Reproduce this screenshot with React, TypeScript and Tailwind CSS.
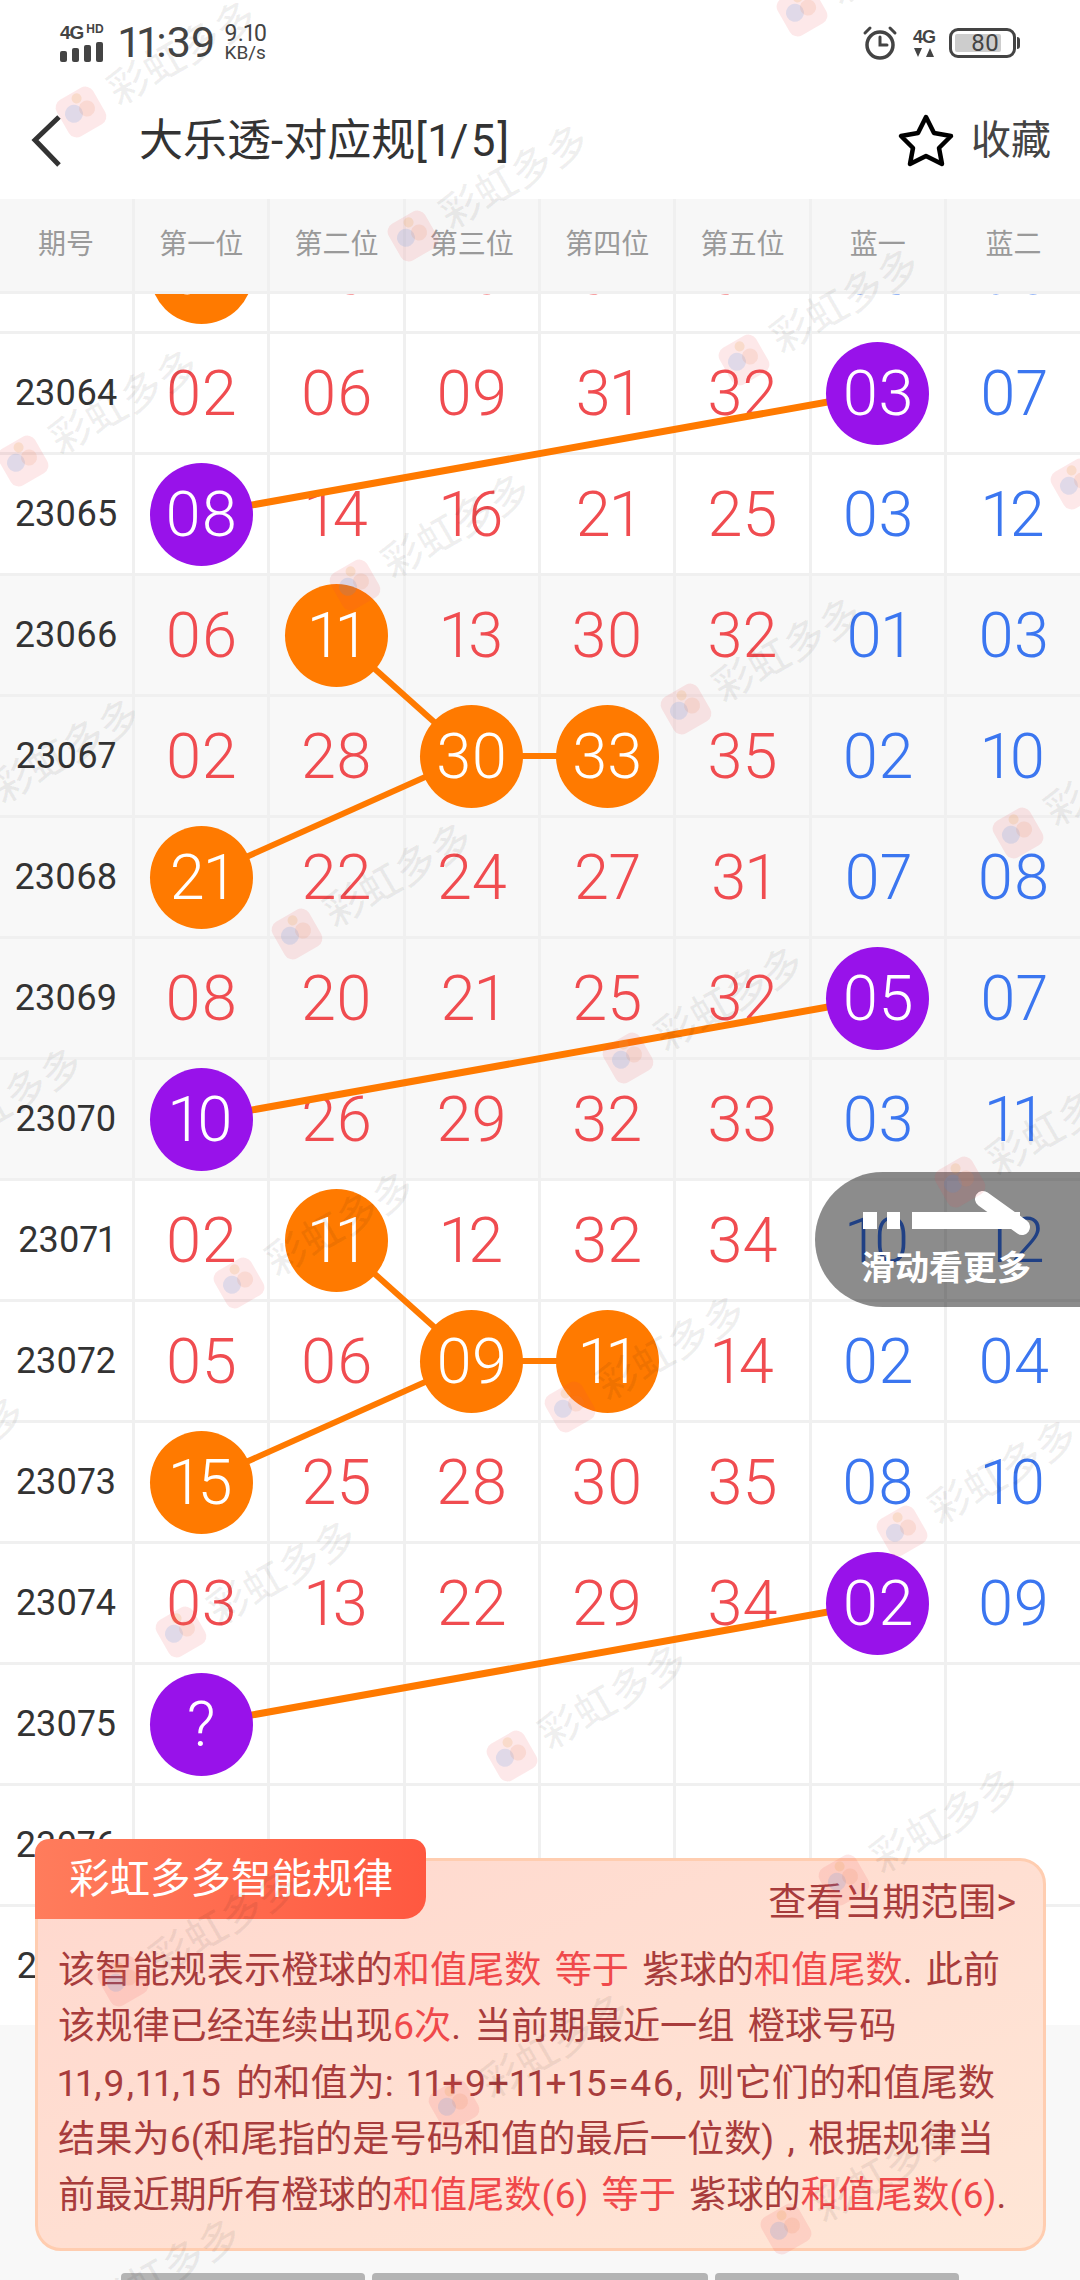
import React from "react";

type Ball = "o" | "p";
type Row = { id: string; nums: string[]; balls?: Record<number, Ball> };

const rows: Row[] = [
  { id: "23063", nums: ["01", "13", "16", "31", "34", "03", "05"], balls: { 0: "o" } },
  { id: "23064", nums: ["02", "06", "09", "31", "32", "03", "07"], balls: { 5: "p" } },
  { id: "23065", nums: ["08", "14", "16", "21", "25", "03", "12"], balls: { 0: "p" } },
  { id: "23066", nums: ["06", "11", "13", "30", "32", "01", "03"], balls: { 1: "o" } },
  { id: "23067", nums: ["02", "28", "30", "33", "35", "02", "10"], balls: { 2: "o", 3: "o" } },
  { id: "23068", nums: ["21", "22", "24", "27", "31", "07", "08"], balls: { 0: "o" } },
  { id: "23069", nums: ["08", "20", "21", "25", "32", "05", "07"], balls: { 5: "p" } },
  { id: "23070", nums: ["10", "26", "29", "32", "33", "03", "11"], balls: { 0: "p" } },
  { id: "23071", nums: ["02", "11", "12", "32", "34", "10", "12"], balls: { 1: "o" } },
  { id: "23072", nums: ["05", "06", "09", "11", "14", "02", "04"], balls: { 2: "o", 3: "o" } },
  { id: "23073", nums: ["15", "25", "28", "30", "35", "08", "10"], balls: { 0: "o" } },
  { id: "23074", nums: ["03", "13", "22", "29", "34", "02", "09"], balls: { 5: "p" } },
  { id: "23075", nums: ["?", "", "", "", "", "", ""], balls: { 0: "p" } },
  { id: "23076", nums: ["", "", "", "", "", "", ""] },
  { id: "23077", nums: ["", "", "", "", "", "", ""] },
];

const cx = (c: number) => 201.5 + 135.33 * c;
const cy = (r: number) => 59 + 121 * r;
const segs: [number, number, number, number, number][] = [
  [1, 5, 2, 0, 7],
  [3, 1, 4, 2, 6],
  [4, 2, 4, 3, 6],
  [4, 2, 5, 0, 6],
  [6, 5, 7, 0, 7],
  [8, 1, 9, 2, 6],
  [9, 2, 9, 3, 6],
  [9, 2, 10, 0, 6],
  [11, 5, 12, 0, 7],
];

const heads = ["期号", "第一位", "第二位", "第三位", "第四位", "第五位", "蓝一", "蓝二"];

const marks: { x: number; y: number }[] = [];
for (let i = -3; i < 5; i++) {
  for (let j = -1; j < 8; j++) {
    const x = 81 + 331.5 * i - 58 * j;
    const y = 112 + 124 * i + 349 * j;
    if (x > -220 && x < 1100 && y > -30 && y < 2400) marks.push({ x, y });
  }
}

function Watermark({ x, y }: { x: number; y: number }) {
  return (
    <div className="absolute w-0 h-0" style={{ left: x, top: y }}>
      <div className="absolute -left-[24px] -top-[30px] h-[60px] flex items-center gap-[11px] origin-[24px_30px] -rotate-[30deg] whitespace-nowrap">
        <svg width="48" height="48" viewBox="0 0 48 48" className="shrink-0">
          <rect x="3" y="3" width="42" height="42" rx="9" fill="#f0404a" opacity="0.12" />
          <circle cx="17" cy="22" r="9" fill="#4a90e8" opacity="0.16" />
          <circle cx="27" cy="10" r="5" fill="#e8a040" opacity="0.18" />
          <circle cx="31" cy="24" r="8" fill="#e88050" opacity="0.14" />
        </svg>
        <span className="text-[41px] leading-none font-medium text-black/[0.06]">彩虹多多</span>
      </div>
    </div>
  );
}

function Cell({ value, ball, blue }: { value: string; ball?: Ball; blue: boolean }) {
  return (
    <div className="flex items-center justify-center border-r-[3px] border-[#f0f0f0] last:border-r-0">
      {ball ? (
        <div
          className={`relative z-20 w-[103px] h-[103px] rounded-full flex items-center justify-center text-white ${
            ball === "o" ? "bg-[#ff7a00]" : "bg-[#9812ea]"
          }`}
        >
          {value}
        </div>
      ) : (
        <span className={blue ? "text-[#3b76f0]" : "text-[#f04c50]"}>{value}</span>
      )}
    </div>
  );
}

const Hi = ({ children }: { children: React.ReactNode }) => <span className="text-[#f0494b]">{children}</span>;

export default function App() {
  return (
    <div className="relative w-[1080px] h-[2280px] overflow-hidden bg-[#f8f8f8] flex flex-col [font-family:Roboto,'Noto_Sans_CJK_SC',sans-serif] font-light proportional-nums">
      {/* status bar */}
      <div className="h-[64px] bg-white flex items-center justify-between pl-[60px] pr-[60px] pt-[21px] text-[#444]">
        <div className="flex items-center">
          <div className="w-[46px] flex flex-col">
            <div className="flex items-start h-[14px] [font-family:'Liberation_Sans',sans-serif] font-bold leading-none">
              <span className="text-[19px] tracking-[-1px]">4G</span>
              <span className="text-[12px] ml-[3px]">HD</span>
            </div>
            <div className="flex items-end gap-[5px] mt-[5px] h-[20px]">
              <i className="w-[7px] h-[11px] rounded-[2px] bg-[#444]" />
              <i className="w-[7px] h-[14px] rounded-[2px] bg-[#444]" />
              <i className="w-[7px] h-[17px] rounded-[2px] bg-[#444]" />
              <i className="w-[7px] h-[20px] rounded-[2px] bg-[#444]" />
            </div>
          </div>
          <span className="ml-[13px] text-[43px] leading-none font-normal">11:39</span>
          <div className="ml-[9px] flex flex-col text-[23px] leading-[21px] font-normal">
            <span>9.10</span>
            <span className="text-[19px] leading-[18px]">KB/s</span>
          </div>
        </div>
        <div className="flex items-center">
          <svg width="36" height="36" viewBox="0 0 36 36" fill="none" stroke="#444" strokeLinecap="round">
            <circle cx="18" cy="20" r="13" strokeWidth="3.5" />
            <path d="M18 12v8h7" strokeWidth="3" />
            <path d="M3 8 8 3M33 8 28 3" strokeWidth="3" />
          </svg>
          <div className="ml-[14px] w-[24px] flex flex-col items-center [font-family:'Liberation_Sans',sans-serif] font-bold">
            <span className="text-[18px] leading-[18px] tracking-[-1px]">4G</span>
            <svg width="20" height="9" viewBox="0 0 20 9" className="mt-[2px]" fill="#444">
              <path d="M0 0h8L4 9zM12 9h8l-4-9z" />
            </svg>
          </div>
          <div className="ml-[13px] w-[67px] h-[30px] rounded-[9px] border-[3px] border-[#444] p-[3px] flex">
            <div className="w-[46px] h-full bg-[#cdcdcd] rounded-[2px] flex items-center justify-end pr-[2px] text-[24px] leading-none font-normal">
              80
            </div>
          </div>
          <div className="w-[3px] h-[12px] bg-[#444] rounded-r-full ml-[1px]" />
        </div>
      </div>

      {/* nav */}
      <div className="h-[135px] bg-white flex items-center pt-[18px] text-[#333]">
        <svg width="34" height="54" viewBox="0 0 34 54" fill="none" stroke="#333" strokeWidth="5" className="ml-[29px]">
          <path d="M30 3 6 26l24 25" />
        </svg>
        <span className="ml-[76px] text-[44px] leading-none font-normal">
          大乐透-对应规<span className="tracking-[2.2px]">[1/5]</span>
        </span>
        <svg width="58" height="56" viewBox="0 0 58 56" fill="none" stroke="#000" strokeWidth="4.5" strokeLinejoin="round" className="ml-auto">
          <path d="M29 4 37 20l17 3-12 12 3 16-16-8-16 8 3-16L4 23l17-3z" />
        </svg>
        <span className="ml-[16px] mr-[29px] text-[40px] leading-none text-[#444] font-normal">收藏</span>
      </div>

      {/* table header */}
      <div className="h-[95px] shrink-0 bg-[#f7f7f7] border-b-[3px] border-[#f0f0f0] grid grid-cols-[135px_repeat(6,135.33px)_1fr] relative z-30">
        {heads.map((h) => (
          <div key={h} className="flex items-center justify-center border-r-[3px] border-[#f0f0f0] last:border-r-0 text-[28px] text-[#9a9a9a] font-normal">
            {h}
          </div>
        ))}
      </div>

      {/* table body */}
      <div className="h-[1731px] shrink-0 overflow-hidden">
        <div className="relative -mt-[81px] text-[63px] leading-none">
          {rows.map((r, ri) => (
            <div
              key={r.id}
              className={`h-[121px] border-b-[3px] border-[#f0f0f0] grid grid-cols-[135px_repeat(6,135.33px)_1fr] ${
                ri >= 3 && ri <= 7 ? "bg-[#f8f8f8]" : "bg-white"
              }`}
            >
              <div className="flex items-center justify-center border-r-[3px] border-[#f0f0f0] text-[36px] text-[#333] font-normal">
                {r.id}
              </div>
              {r.nums.map((n, i) => (
                <Cell key={i} value={n} ball={r.balls?.[i]} blue={i >= 5} />
              ))}
            </div>
          ))}
          <svg className="absolute left-0 top-0 z-10 pointer-events-none" width="1080" height="1815">
            {segs.map(([r1, c1, r2, c2, w], i) => (
              <line key={i} x1={cx(c1)} y1={cy(r1)} x2={cx(c2)} y2={cy(r2)} stroke="#ff7a00" strokeWidth={w} />
            ))}
          </svg>
        </div>
      </div>

      {/* bottom handles */}
      <div className="flex-1 flex items-end pl-[121px] gap-[7px]">
        <i className="w-[244px] h-[7px] bg-[#b4b4b4] rounded-t-[4px]" />
        <i className="w-[336px] h-[7px] bg-[#b4b4b4] rounded-t-[4px]" />
        <i className="w-[244px] h-[7px] bg-[#b4b4b4] rounded-t-[4px]" />
      </div>

      {/* scroll hint */}
      <div className="absolute z-40 right-0 top-[1172px] w-[265px] h-[135px] rounded-l-[68px] bg-black/45 flex items-end justify-center pr-[3px] pb-[22px]">
        <svg className="absolute left-0 top-0" width="265" height="135" viewBox="0 0 265 135" fill="none">
          <path d="M48 40h14v17H48zM72 40h13v17H72zM97 40h108v17H97z" fill="#fff" />
          <path d="M168 27 207 55" stroke="#fff" strokeWidth="16" strokeLinecap="round" />
        </svg>
        <span className="relative text-white text-[34px] leading-none font-bold">滑动看更多</span>
      </div>

      {/* rule panel */}
      <div className="absolute z-40 left-[35px] top-[1858px] w-[1011px] h-[393px] rounded-[26px] border-[3px] border-[#ffcdb0] bg-gradient-to-br from-[#ffd8ce] to-[#ffe6d6] pl-[20px] pt-[81px] text-[37.2px] leading-[56.3px] text-[#a83c3c] whitespace-nowrap font-normal [word-spacing:4px]">
        <div className="absolute -left-[3px] -top-[22px] w-[391px] h-[80px] rounded-t-[14px] rounded-br-[22px] bg-gradient-to-r from-[#ff7c5c] to-[#ff5840] flex items-center pl-[34px] text-[40.5px] leading-none text-white">
          彩虹多多智能规律
        </div>
        <div className="absolute right-[27px] top-[22px] text-[38px] leading-none">查看当期范围&gt;</div>
        <div>
          该智能规表示橙球的<Hi>和值尾数 等于</Hi> 紫球的<Hi>和值尾数</Hi>. 此前
        </div>
        <div>
          该规律已经连续出现<Hi>6次</Hi>. 当前期最近一组 橙球号码
        </div>
        <div>
          <span className="tracking-[2px]">11,9,11,15</span> 的和值为: <span className="tracking-[1.5px]">11+9+11+15=46,</span> 则它们的和值尾数
        </div>
        <div>结果为6(和尾指的是号码和值的最后一位数) , 根据规律当</div>
        <div>
          前最近期所有橙球的<Hi>和值尾数(6) 等于</Hi> 紫球的<Hi>和值尾数(6)</Hi>.
        </div>
      </div>

      {/* watermarks */}
      <div className="absolute inset-0 z-50 pointer-events-none overflow-hidden">
        {marks.map((m, i) => (
          <Watermark key={i} x={m.x} y={m.y} />
        ))}
      </div>
    </div>
  );
}
